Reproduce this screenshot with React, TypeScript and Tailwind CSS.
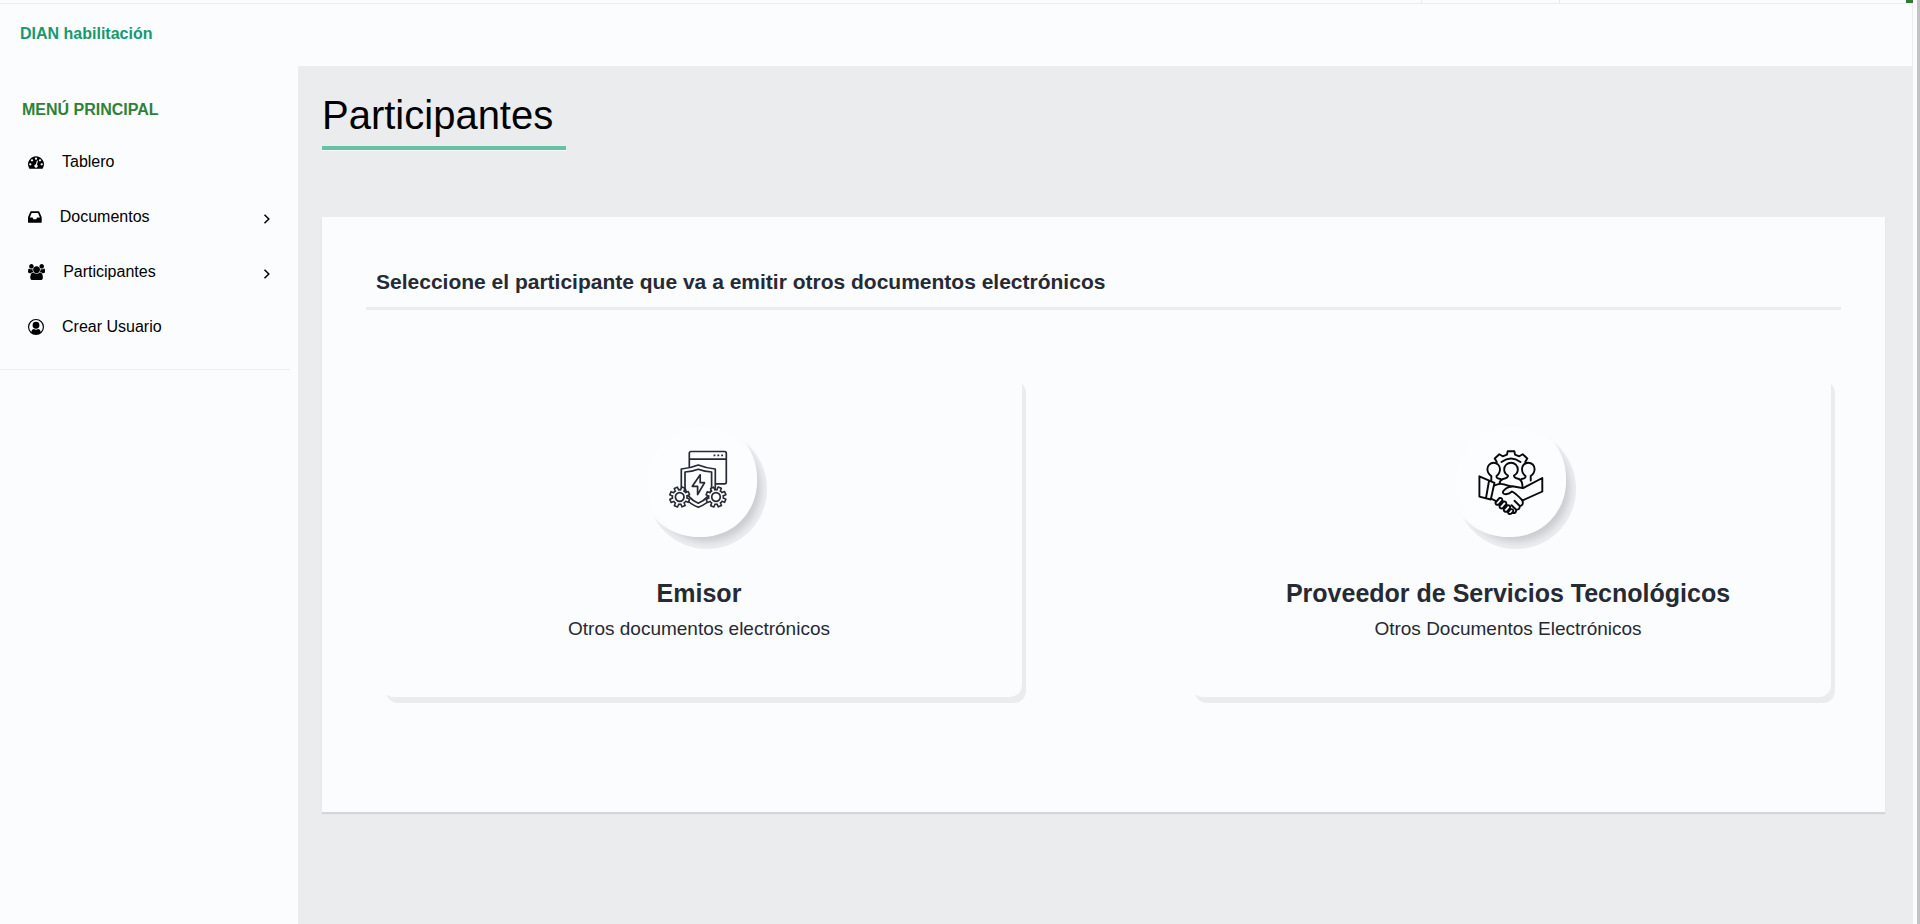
import type { ReactNode } from "react";

type MenuEntry = { label: string; width: number; path: string; expandable: boolean };

const menu: MenuEntry[] = [
  {
    label: "Tablero",
    width: 1792,
    path: "M384 1152q0-53-37.5-90.5t-90.5-37.5-90.5 37.5-37.5 90.5 37.5 90.5 90.5 37.5 90.5-37.5 37.5-90.5zm192-448q0-53-37.5-90.5t-90.5-37.5-90.5 37.5-37.5 90.5 37.5 90.5 90.5 37.5 90.5-37.5 37.5-90.5zm428 481l101-382q6-26-7.5-48.5t-38.5-29.5-48 6.5-30 39.5l-101 382q-60 5-107 43.5t-63 98.5q-20 77 20 146t117 89 146-20 89-117q16-60-6-117t-72-91zm660-33q0-53-37.5-90.5t-90.5-37.5-90.5 37.5-37.5 90.5 37.5 90.5 90.5 37.5 90.5-37.5 37.5-90.5zm-640-640q0-53-37.5-90.5t-90.5-37.5-90.5 37.5-37.5 90.5 37.5 90.5 90.5 37.5 90.5-37.5 37.5-90.5zm448 192q0-53-37.5-90.5t-90.5-37.5-90.5 37.5-37.5 90.5 37.5 90.5 90.5 37.5 90.5-37.5 37.5-90.5zm320 448q0 261-141 483-19 29-54 29h-1402q-35 0-54-29-141-221-141-483 0-182 71-348t191-286 286-191 348-71 348 71 286 191 191 286 71 348z",
    expandable: false,
  },
  {
    label: "Documentos",
    width: 1536,
    path: "M1023 960h316q-1-3-2.5-8.5t-2.5-7.5l-212-496h-708l-212 496q-1 3-2.5 8.5t-2.5 7.5h316l95 192h320zm513 30v482q0 26-19 45t-45 19h-1408q-26 0-45-19t-19-45v-482q0-62 25-123l238-552q10-25 36.5-42t52.5-17h832q26 0 52.5 17t36.5 42l238 552q25 61 25 123z",
    expandable: true,
  },
  {
    label: "Participantes",
    width: 1920,
    path: "M593 896q-162 5-265 128h-134q-82 0-138-40.5t-56-118.5q0-353 124-353 6 0 43.5 21t97.5 42.5 119 21.5q67 0 133-23-5 37-5 66 0 139 81 256zm1071 637q0 120-73 189.5t-194 69.5h-874q-121 0-194-69.5t-73-189.5q0-53 3.5-103.5t14-109 26.5-108.5 43-97.5 62-81 85.5-53.5 111.5-20q10 0 43 21.5t73 48 107 48 135 21.5 135-21.5 107-48 73-48 43-21.5q61 0 111.5 20t85.5 53.5 62 81 43 97.5 26.5 108.5 14 109 3.5 103.5zm-1024-1277q0 106-75 181t-181 75-181-75-75-181 75-181 181-75 181 75 75 181zm704 384q0 159-112.5 271.5t-271.5 112.5-271.5-112.5-112.5-271.5 112.5-271.5 271.5-112.5 271.5 112.5 112.5 271.5zm576 225q0 78-56 118.5t-138 40.5h-134q-103-123-265-128 81-117 81-256 0-29-5-66 66 23 133 23 59 0 119-21.5t97.5-42.5 43.5-21q124 0 124 353zm-128-609q0 106-75 181t-181 75-181-75-75-181 75-181 181-75 181 75 75 181z",
    expandable: true,
  },
  {
    label: "Crear Usuario",
    width: 1792,
    path: "M896 0a896 896 0 1 1 0 1792a896 896 0 1 1 0-1792zM1420 1450a768 768 0 1 0-1048 0c40-200 130-330 290-330q100 90 234 90t234-90c160 0 250 130 290 330zM1280 704a384 384 0 1 1-768 0a384 384 0 1 1 768 0z",
    expandable: false,
  },
];

const toothAngles = [22, 67, 112, 157, 202, 247, 292, 337];

function Gear({ x, y }: { x: number; y: number }) {
  return (
    <g transform={`translate(${x} ${y})`}>
      <g fill="#252a34" stroke="none">
        <circle r="8.2" />
        {toothAngles.map((angle) => (
          <rect key={angle} x="-2.5" y="-10.8" width="5" height="6" rx="0.8" transform={`rotate(${angle})`} />
        ))}
      </g>
      <g fill="#fcfdfe" stroke="none">
        <circle r="6.6" />
        {toothAngles.map((angle) => (
          <rect key={angle} x="-1" y="-9.2" width="2" height="5" transform={`rotate(${angle})`} />
        ))}
      </g>
      <circle r="4.3" />
    </g>
  );
}

function ShieldIcon() {
  return (
    <svg aria-hidden="true" width="76" height="76" viewBox="0 0 76 76" fill="none" stroke="#252a34" strokeWidth="1.7" strokeLinejoin="round">
      <rect x="25.3" y="7.5" width="37" height="32.3" rx="1.8" />
      <path d="M25.3 15.2H62.3" />
      <path d="M49.6 11.4h1.8M53.4 11.4h1.8M57.2 11.4h1.8" strokeWidth="1.8" />
      <path d="M17.3 25Q27 24 34.3 21Q41.6 24 51.3 25V44Q50 57 34.3 63.3Q18.6 57 17.3 44Z" fill="#fcfdfe" />
      <path d="M21 28Q28 27.5 34.3 25.2Q40.6 27.5 47.6 28V44Q46 54 34.3 59.2Q22.6 54 21 44Z" />
      <path d="M36.2 30.8L28.3 42.3H33.6V50.6L40.5 38.7H36.2Z" />
      <Gear x={15.7} y={53} />
      <Gear x={52} y={53} />
    </svg>
  );
}

function HandshakeIcon() {
  return (
    <svg aria-hidden="true" width="74" height="74" viewBox="0 1 74 74" fill="none" stroke="#08090c" strokeWidth="1.9" strokeLinejoin="round" strokeLinecap="round">
      <path d="M22.8 18L20.7 14.5L25.3 10.2L28.7 12.3L33 10.6L33.6 7.3H40.4L41 10.6L45.3 12.3L48.7 10.2L53.3 14.5L51.2 18" />
      <path d="M27.5 18Q37 11 46.5 18" />
      <path d="M17.3 36.5V32Q13.4 29.5 13.4 25A6.3 6.3 0 0 1 26 25Q26 29.5 22.5 32Q22 34.5 26.5 35" />
      <path d="M56.7 36.5V32Q60.6 29.5 60.6 25A6.3 6.3 0 0 0 48 25Q48 29.5 51.5 32Q52 34.5 47.5 35" />
      <path d="M25.5 39.5Q26 36 29 35Q34.2 34 34 31.5Q30.2 29.5 30.2 25.5A6.8 6.8 0 0 1 43.8 25.5Q43.8 29.5 40 31.5Q39.8 34 45 35Q48.5 36.3 48.5 43.5" />
      <path d="M5.4 32.3L20.5 38.8L16.8 55.5L5.4 52.7ZM15 37L12 54" />
      <path d="M20.5 41.5Q25 39 30 40.3L37 42.5" />
      <path d="M68.3 34L49 44.2Q44 43 38.5 42.2Q33 42.8 29.5 46.8Q27.6 50 32 50.2Q35.5 49.8 38 47.5Q42 49.5 48.5 56.5L68.3 47.5Z" />
      <path d="M17 54.5L21.5 56.8" />
      <path d="M21.5 58.5L25.5 54Q28.5 53.5 28.3 56.5L24.6 60.7Q21.3 61.2 21.5 58.5ZM25.5 62L29.5 57.5Q32.5 57 32.3 60L28.6 64.4Q25.3 64.8 25.5 62ZM29.8 65.5L33.4 61.3Q36.4 60.8 36.2 63.8L33 67.7Q29.7 68.2 29.8 65.5ZM34 68.3L36.6 65.2Q39.5 64.8 39.3 67.5L37.3 69.7Q34.3 70.7 34 68.3Z" />
      <path d="M38.8 69Q42.3 69.5 42.2 65.8Q45.8 66 45.8 62Q49.8 61.5 48.5 56.5M42.2 65.8L37.5 61.2M45.8 62L40.5 56.8" />
    </svg>
  );
}

function Option({ title, subtitle, icon }: { title: string; subtitle: string; icon: ReactNode }) {
  return (
    <a href="#" className="flex min-h-[322px] flex-col items-center rounded-xl bg-[#fbfcfe] pt-13 text-center shadow-[4px_6px_0_#ebecee]">
      <span className="flex size-[110px] items-center justify-center rounded-full bg-[#fcfdfe] shadow-[-4px_-4px_0_4px_#fbfcfe,5px_6px_7px_-1px_#cbccd0,5px_7px_0_5px_#ebedef]">
        {icon}
      </span>
      <div className="mt-10 pr-1.5">
        <h3 className="text-[25px] leading-8 font-bold">{title}</h3>
        <p className="mt-1.5 text-[19px] leading-7">{subtitle}</p>
      </div>
    </a>
  );
}

export default function App() {
  return (
    <div className="flex min-h-screen bg-[#fbfcfe] font-['Liberation_Sans',Arial,sans-serif] text-[#252a34]">
      <div className="flex grow flex-col">
        <div className="flex h-1 justify-end border-b border-[#ebecee]">
          <div className="w-[139px] border-x border-[#ebecee]" />
          <div className="w-[346px]" />
          <div className="w-[7px] bg-[#2d7a3a]" />
        </div>
        <header className="flex h-[62px] items-center border-r border-[#ebecee] px-5 pb-0.5">
          <a href="#" className="font-bold text-[#17996f]">
            DIAN habilitación
          </a>
        </header>
        <div className="flex grow">
          <aside className="w-[298px] shrink-0 pt-8 pr-2">
            <nav aria-labelledby="menu-title" className="border-b border-[#ebecee] pb-[15px]">
              <h2 id="menu-title" className="mb-3 pl-[22px] font-bold text-[#2d8238]">
                MENÚ PRINCIPAL
              </h2>
              <ul>
                {menu.map((entry) => (
                  <li key={entry.label}>
                    <a href="#" className="flex h-[55px] items-center pr-[18px] pl-7 text-black">
                      <svg aria-hidden="true" height="16" width={entry.width / 112} viewBox={`0 0 ${entry.width} 1792`} fillRule="evenodd">
                        <path d={entry.path} />
                      </svg>
                      <span className="ml-[18px] grow">{entry.label}</span>
                      {entry.expandable && (
                        <svg aria-hidden="true" width="10" height="16" viewBox="0 0 10 16" fill="none" stroke="#000" strokeWidth="1.5">
                          <path d="M2.5 5.8L6.8 10L2.5 14.2" />
                        </svg>
                      )}
                    </a>
                  </li>
                ))}
              </ul>
            </nav>
          </aside>
          <main className="grow bg-[#ebecee] pt-[25px] pr-7 pl-6">
            <h1 className="w-fit border-b-4 border-[#67c2a5] pr-[13px] pb-[7px] text-[40px] leading-[48px] text-black shadow-[0_1px_0_#f8fafb]">
              Participantes
            </h1>
            <section className="mt-[67px] bg-[#fbfcfe] px-11 pt-[49px] pb-[115px] shadow-[0_2px_1px_#d3d5d8]">
              <h2 className="border-b-3 border-[#ebecee] pb-[9px] pl-[10px] text-[21px] leading-8 font-bold">
                Seleccione el participante que va a emitir otros documentos electrónicos
              </h2>
              <div className="mt-[65px] grid grid-cols-2 gap-[169px] pr-[10px] pl-4">
                <Option title="Emisor" subtitle="Otros documentos electrónicos" icon={<ShieldIcon />} />
                <Option title="Proveedor de Servicios Tecnológicos" subtitle="Otros Documentos Electrónicos" icon={<HandshakeIcon />} />
              </div>
            </section>
          </main>
        </div>
      </div>
      <div className="w-[7px] shrink-0 border-r-3 border-[#c2c3c5]" />
    </div>
  );
}
